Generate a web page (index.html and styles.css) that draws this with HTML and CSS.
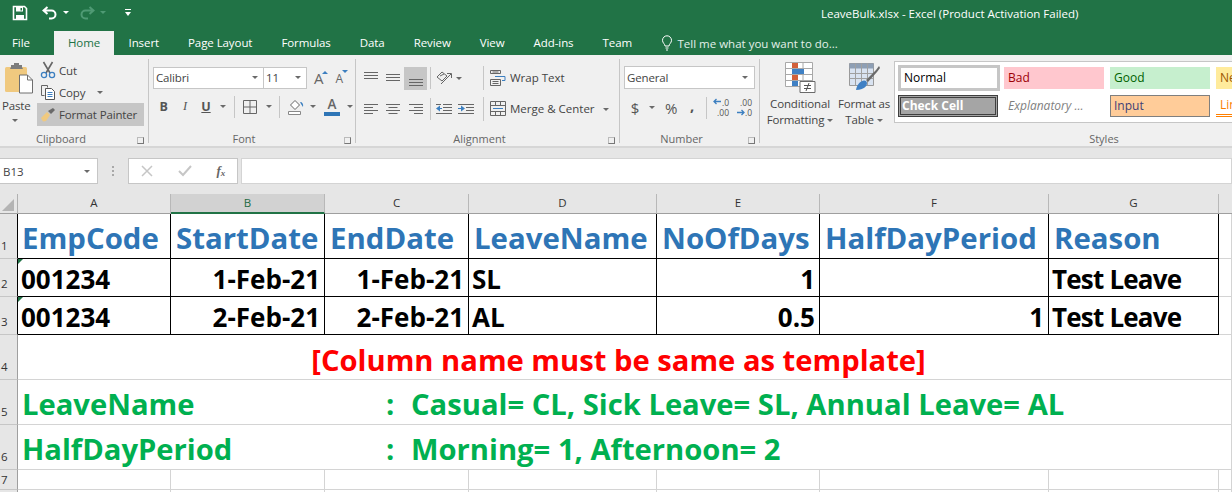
FILE: index.html
```html
<!DOCTYPE html>
<html lang="en">
<head>
<meta charset="utf-8">
<title>LeaveBulk.xlsx - Excel</title>
<link rel="stylesheet" href="styles.css">
</head>
<body>
<header class="titlebar">
  <div class="qat">
    <svg class="qat-save" width="16" height="16" viewBox="0 0 16 16"><path d="M1.500 1.500h11l2 2v11h-13z" fill="none" stroke="#fff" stroke-width="1.600"/><path d="M4 2h7v4.500H4zM4 10h8v4H4z" fill="#fff"/><path d="M8.500 3h1.500v2.500H8.500z" fill="#217346"/></svg>
    <svg class="qat-undo" width="16" height="14" viewBox="0 0 16 14"><path d="M5.500 1 1.500 4.500l4 3.500M2 4.500h7.500a4 4 0 0 1 0 8H7" fill="none" stroke="#fff" stroke-width="2"/></svg>
    <i class="caret caret-w"></i>
    <svg class="qat-redo" width="16" height="14" viewBox="0 0 16 14"><path d="M10.500 1l4 3.500-4 3.500M14 4.500H6.500a4 4 0 0 0 0 8H9" fill="none" stroke="#4f9a74" stroke-width="2"/></svg>
    <i class="caret caret-d"></i>
    <svg class="qat-more" width="8" height="9" viewBox="0 0 8 9"><path d="M1 1.500h6" stroke="#fff"/><path d="M1 4h6L4 8z" fill="#fff"/></svg>
  </div>
  <div class="doc-title">LeaveBulk.xlsx - Excel (Product Activation Failed)</div>
</header>
<nav class="tabs">
  <span class="tab tab-file">File</span>
  <span class="tab tab-active">Home</span>
  <span class="tab">Insert</span>
  <span class="tab">Page Layout</span>
  <span class="tab">Formulas</span>
  <span class="tab">Data</span>
  <span class="tab">Review</span>
  <span class="tab">View</span>
  <span class="tab">Add-ins</span>
  <span class="tab">Team</span>
  <span class="tell">
    <svg width="12" height="16" viewBox="0 0 12 16"><path d="M4 11c0-2-2.500-3-2.500-5.700a4.500 4.500 0 0 1 9 0C10.500 8 8 9 8 11zM4.500 13h3M5 15h2" fill="none" stroke="#fff"/></svg>
    Tell me what you want to do...
  </span>
</nav>
<section class="ribbon">
  <div class="group g-clip">
    <div class="body clip-body">
      <div class="paste">
        <svg width="30" height="32" viewBox="0 0 30 32"><rect x="1" y="5" width="22" height="25" rx="1.500" fill="#f0c97f"/><path d="M7 5V3h3V1h5v2h3v2l1 2H6z" fill="#7c7c7c"/><path d="M15.500 13h8l5 5v13h-13z" fill="#fff" stroke="#6f6f6f"/><path d="M23.500 13v5h5" fill="none" stroke="#6f6f6f"/></svg>
        <span class="paste-label">Paste</span>
        <i class="caret"></i>
      </div>
      <div class="clip-actions">
        <div class="clip-row">
          <svg width="16" height="18" viewBox="0 0 16 18"><path d="M3.500 1 10 12M12.500 1 6 12" stroke="#666" stroke-width="1.600" fill="none"/><circle cx="4" cy="14" r="2.600" fill="none" stroke="#3c7fc0" stroke-width="1.300"/><circle cx="12" cy="14" r="2.600" fill="none" stroke="#3c7fc0" stroke-width="1.300"/></svg>
          <span>Cut</span>
        </div>
        <div class="clip-row">
          <svg width="16" height="16" viewBox="0 0 16 16"><path d="M1.500 1.500h6v2M1.500 1.500v10h3" fill="none" stroke="#666"/><path d="M5.500 4.500h6l3 3v8h-9z" fill="#fff" stroke="#555"/><path d="M7.500 8.500h5M7.500 10.500h5M7.500 12.500h5" stroke="#3c7fc0"/></svg>
          <span>Copy</span><i class="caret caret-copy"></i>
        </div>
        <div class="clip-row clip-row-on">
          <svg width="16" height="14" viewBox="0 0 16 14"><path d="M1 10 7 4l3 3-4 6-3 .500z" fill="#f0c97f"/><path d="M8 3l3 3 4-4-2-2z" fill="#6a6a6a"/></svg>
          <span>Format Painter</span>
        </div>
      </div>
    </div>
    <div class="label label-clip"><span>Clipboard</span><i class="launch"></i></div>
  </div>

  <div class="group g-font">
    <div class="body font-body">
      <div class="row font-row">
        <div class="select sel-font"><span>Calibri</span><i class="caret"></i></div>
        <div class="select sel-size"><span>11</span><i class="caret"></i></div>
        <span class="grow-a">A<i class="tri-up"></i></span>
        <span class="shrink-a">A<i class="tri-down"></i></span>
      </div>
      <div class="row font-row2">
        <span class="ib w21 fb">B</span>
        <span class="ib w22 fi">I</span>
        <span class="ib w20 fu">U</span>
        <span class="ib w14"><i class="caret"></i></span>
        <i class="sep m4"></i>
        <span class="ib w24"><svg width="14" height="14" viewBox="0 0 14 14"><path d="M.5.500h13v13H.5zM7 .500v13M.5 7h13" fill="none" stroke="#666"/></svg></span>
        <span class="ib w14"><i class="caret"></i></span>
        <i class="sep m2"></i>
        <span class="ib w26"><svg width="17" height="16" viewBox="0 0 17 16"><path d="M2.500 6 7 1.500l4.500 4.500L7 10.500z" fill="#fff" stroke="#666"/><path d="M12 3c2.500 0 3.500 2 3 5l-2-3z" fill="#3c7fc0"/><path d="M.5 12.500h12v3H.5z" fill="#fff" stroke="#888"/></svg></span>
        <span class="ib w8"><i class="caret"></i></span>
        <span class="ib w26 mc"><span class="font-color">A</span></span>
        <span class="ib w10"><i class="caret"></i></span>
      </div>
    </div>
    <div class="label label-mid"><span>Font</span><i class="launch"></i></div>
  </div>

  <div class="group g-align">
    <div class="body align-body">
      <div class="row align-row">
        <span class="ib w22"><svg width="16" height="12" viewBox="0 0 16 12"><path d="M1 .500h14M1 3.500h14M1 6.500h14" stroke="#666"/></svg></span>
        <span class="ib w22"><svg width="14" height="10" viewBox="0 0 14 10"><path d="M0 1.500h14M0 4.500h14M0 7.500h14" stroke="#666"/></svg></span>
        <span class="ib w23 on"><svg width="14" height="22" viewBox="0 0 14 22"><path d="M0 12.500h14M0 15.500h14M0 18.500h14" stroke="#666"/></svg></span>
        <i class="sep m3"></i>
        <span class="ib w22"><svg width="17" height="16" viewBox="0 0 17 16"><path d="M5 14 15 4M11 3.500h4.500V8" fill="none" stroke="#666"/><path d="M1 7l5-5 5 4-5 5z" fill="none" stroke="#666"/><path d="M4 6l4-2" stroke="#666"/></svg></span>
        <span class="ib w8"><i class="caret"></i></span>
        <i class="sep m-wrap"></i>
        <span class="text-btn">
          <svg width="16" height="16" viewBox="0 0 16 16"><path d="M.5.500h10v3H.5zM.5 9.500h10v6H.5zM2.500 11.500h6M2.500 13.500h6M2.500 2h6" fill="none" stroke="#666"/><path d="M5 6.500h10v4h-3" fill="none" stroke="#3c7fc0"/></svg>
          <span>Wrap Text</span>
        </span>
      </div>
      <div class="row align-row2">
        <span class="ib w22"><svg width="14" height="12" viewBox="0 0 14 12"><path d="M0 1.500h14M0 4.500h9M0 7.500h14M0 10.500h9" stroke="#666"/></svg></span>
        <span class="ib w22"><svg width="14" height="12" viewBox="0 0 14 12"><path d="M0 1.500h14M2.500 4.500h9M0 7.500h14M2.500 10.500h9" stroke="#666"/></svg></span>
        <span class="ib w23"><svg width="14" height="12" viewBox="0 0 14 12"><path d="M0 1.500h14M5 4.500h9M0 7.500h14M5 10.500h9" stroke="#666"/></svg></span>
        <i class="sep m3"></i>
        <span class="ib w22"><svg width="16" height="12" viewBox="0 0 16 12"><path d="M7 1.500h9M7 4.500h9M7 7.500h9M0 10.500h16M0 1.500h5" stroke="#666"/><path d="M0 5.500 4 2.500v6z" fill="#3c7fc0"/><path d="M3 5.500h3" stroke="#3c7fc0"/></svg></span>
        <span class="ib w22"><svg width="16" height="12" viewBox="0 0 16 12"><path d="M8 4.500h8M8 7.500h8M0 10.500h16M0 1.500h16" stroke="#666"/><path d="M7 5.500 3 2.500v6z" fill="#3c7fc0"/><path d="M0 5.500h4" stroke="#3c7fc0"/></svg></span>
        <i class="sep m-merge"></i>
        <span class="text-btn">
          <svg width="16" height="15" viewBox="0 0 16 15"><path d="M.5.500h15v14H.5zM.5 4.500h15M.5 10.500h15M5.500.500v4M10.500.500v4M5.500 10.500v4M10.500 10.500v4" fill="none" stroke="#666"/><path d="M3 7.500h10" stroke="#3c7fc0"/></svg>
          <span>Merge &amp; Center</span>
        </span>
        <i class="caret caret-merge"></i>
      </div>
    </div>
    <div class="label label-mid"><span>Alignment</span><i class="launch"></i></div>
  </div>

  <div class="group g-num">
    <div class="body num-body">
      <div class="select sel-num"><span>General</span><i class="caret"></i></div>
      <div class="row num-row">
        <span class="ib w22 num-sym">$</span>
        <span class="ib w12"><i class="caret"></i></span>
        <span class="ib w26 num-sym">%</span>
        <span class="ib w16 num-comma">,</span>
        <i class="sep m-num"></i>
        <span class="ib w23 dec"><b>.0</b><b>.00</b><svg width="8" height="7" viewBox="0 0 8 7"><path d="M8 3.500H1M3.500 1 1 3.500 3.500 6" fill="none" stroke="#3c7fc0" stroke-width="1.300"/></svg></span>
        <span class="ib w23 dec"><b>.00</b><b>.0</b><svg width="8" height="7" viewBox="0 0 8 7"><path d="M0 3.500h7M4.500 1 7 3.500 4.500 6" fill="none" stroke="#3c7fc0" stroke-width="1.300"/></svg></span>
      </div>
    </div>
    <div class="label label-mid"><span>Number</span><i class="launch"></i></div>
  </div>

  <div class="group g-styles">
    <div class="body styles-body">
      <div class="big cf">
        <svg width="31" height="31" viewBox="0 0 31 31"><path d="M.5.500h27v24H.5zM9 .500v24M18 .500v24M.5 6.500h27M.5 12.500h27M.5 18.500h27" fill="#fff" stroke="#a8a8a8"/><path d="M7 1h6v5H7zM7 13h6v5H7z" fill="#d2603a"/><path d="M7 7h12v5H7zM7 19h6v5H7z" fill="#3f80c4"/><path d="M15 19.500h15v11H15z" fill="#fff" stroke="#6a6a6a"/><path d="M19 23.500h7M19 26.500h7M24 21l-3 8" stroke="#555" fill="none"/></svg>
        <span class="big-text">Conditional<br>Formatting<i class="caret caret-in"></i></span>
      </div>
      <div class="big ft">
        <svg width="31" height="31" viewBox="0 0 31 31"><path d="M.5 1.500h24v22H.5z" fill="#d9e3f1" stroke="#999"/><path d="M.5 1.500h24v5H.5z" fill="#8e9fb5"/><path d="M6.500 1.500v22M12.500 1.500v22M18.500 1.500v22M.5 11.500h24M.5 16.500h24" stroke="#a0a0a0"/><path d="M17 18 27 8l3-4 1 2-3 4-9 10z" fill="#6a6a6a"/><path d="M7 28c1-7 7-11 10-9 3 3-1 9-10 9z" fill="#3f80c4"/></svg>
        <span class="big-text">Format as<br>Table<i class="caret caret-in"></i></span>
      </div>
      <div class="gallery">
        <span class="st st-normal">Normal</span>
        <span class="st st-bad">Bad</span>
        <span class="st st-good">Good</span>
        <span class="st st-neutral">Neutral</span>
        <span class="st st-check">Check Cell</span>
        <span class="st st-expl">Explanatory ...</span>
        <span class="st st-input">Input</span>
        <span class="st st-link">Linked Cell</span>
      </div>
    </div>
    <div class="label label-styles"><span>Styles</span></div>
  </div>
</section>

<section class="formula-strip">
  <div class="namebox"><span>B13</span><i class="caret"></i></div>
  <div class="grip"></div>
  <div class="fx-box">
    <svg width="12" height="12" viewBox="0 0 12 12"><path d="M1 1l10 10M11 1 1 11" stroke="#c6c6c6" stroke-width="1.500"/></svg>
    <svg width="14" height="12" viewBox="0 0 14 12"><path d="M1 6l4 4 8-9" fill="none" stroke="#c6c6c6" stroke-width="2"/></svg>
    <span class="fx">f<sub>x</sub></span>
  </div>
  <div class="formula-input"></div>
</section>

<main class="sheet">
  <div class="corner"><i></i></div>
  <div class="ch">A</div><div class="ch ch-on">B</div><div class="ch">C</div><div class="ch">D</div><div class="ch">E</div><div class="ch">F</div><div class="ch">G</div><div class="ch ch-rest"></div>

  <div class="rh rh-b">1</div>
  <div class="c c-b c-h c-first">EmpCode</div><div class="c c-b c-h">StartDate</div><div class="c c-b c-h">EndDate</div><div class="c c-b c-h">LeaveName</div><div class="c c-b c-h">NoOfDays</div><div class="c c-b c-h">HalfDayPeriod</div><div class="c c-b c-h">Reason</div><div class="c"></div>

  <div class="rh rh-b">2</div>
  <div class="c c-b c-d c-flag">001234</div><div class="c c-b c-d c-r">1-Feb-21</div><div class="c c-b c-d c-r">1-Feb-21</div><div class="c c-b c-d">SL</div><div class="c c-b c-d c-r">1</div><div class="c c-b c-d c-r"></div><div class="c c-b c-d c-tl">Test Leave</div><div class="c"></div>

  <div class="rh rh-b">3</div>
  <div class="c c-b c-d c-flag">001234</div><div class="c c-b c-d c-r">2-Feb-21</div><div class="c c-b c-d c-r">2-Feb-21</div><div class="c c-b c-d">AL</div><div class="c c-b c-d c-r">0.5</div><div class="c c-b c-d c-r">1</div><div class="c c-b c-d c-tl">Test Leave</div><div class="c"></div>

  <div class="rh">4</div>
  <div class="c c-span c-note">[Column name must be same as template]</div><div class="c"></div>

  <div class="rh">5</div>
  <div class="c c-span c-key"><span class="key">LeaveName</span><span class="colon">:</span><span>Casual= CL, Sick Leave= SL, Annual Leave= AL</span></div><div class="c"></div>

  <div class="rh">6</div>
  <div class="c c-span c-key"><span class="key">HalfDayPeriod</span><span class="colon">:</span><span>Morning= 1, Afternoon= 2</span></div><div class="c"></div>

  <div class="rh rh-s">7</div>
  <div class="c"></div><div class="c"></div><div class="c"></div><div class="c"></div><div class="c"></div><div class="c"></div><div class="c"></div><div class="c"></div>

  <div class="rh"></div>
  <div class="c"></div><div class="c"></div><div class="c"></div><div class="c"></div><div class="c"></div><div class="c"></div><div class="c"></div><div class="c"></div>
</main>
</body>
</html>
```
FILE: styles.css
```css
* { box-sizing: border-box; }
html, body { margin: 0; height: 492px; overflow: hidden; background: #fff; }
body { font-family: "Open Sans", "Noto Sans", sans-serif; font-size: 11.5px; color: #444; letter-spacing: -0.15px; }
i { display: block; font-style: normal; }

.titlebar { height: 31px; background: #217346; color: #fff; display: flex; align-items: flex-start; }
.qat { width: 821px; height: 25px; display: flex; align-items: center; }
.qat-save { margin-left: 12px; }
.qat-undo { margin-left: 14px; }
.qat-redo { margin-left: 10px; }
.qat-more { margin-left: 18px; }
.caret-w { margin-left: 5px; border-top-color: #fff !important; }
.caret-d { margin-left: 5px; border-top-color: #4f9a74 !important; }
.doc-title { font-size: 11.5px; line-height: 28px; white-space: nowrap; letter-spacing: 0; }

.caret { width: 0; height: 0; border-left: 3.5px solid transparent; border-right: 3.5px solid transparent; border-top: 3.5px solid #6a6a6a; flex: none; }

.tabs { height: 24px; background: #217346; color: #fff; display: flex; align-items: stretch; font-size: 11.5px; letter-spacing: -0.08px; }
.tab { padding: 0 14.5px; line-height: 24px; white-space: nowrap; }
.tab-file { padding: 0 12px; width: 54px; }
.tab-active { background: #f0f0f0; color: #217346; width: 60px; padding: 0; text-align: center; }
.tell { margin-left: 14px; display: flex; align-items: center; gap: 5px; color: #e3f0ea; white-space: nowrap; letter-spacing: 0; }

.ribbon { height: 93px; background: #f0f0f0; border-bottom: 2px solid #d6d6d6; padding-top: 4px; display: flex; align-items: flex-start; }
.group { height: 84px; border-right: 1px solid #c6c6c6; display: flex; flex-direction: column; flex: none; }
.g-clip { width: 149px; }
.g-font { width: 207px; }
.g-align { width: 264px; }
.g-num { width: 140px; }
.g-styles { width: 472px; border-right: 0; }
.body { height: 76px; }
.label { height: 8px; line-height: 8px; font-size: 11px; color: #666; text-align: center; position: relative; letter-spacing: 0; }
.label-clip { padding-right: 26px; }
.label-mid { padding-right: 16px; }
.label-styles { padding-left: 216px; }
.launch { position: absolute; right: 4px; top: 2px; width: 7px; height: 7px; border-right: 1px solid #777; border-bottom: 1px solid #777; border-left: 1px solid #bbb; border-top: 1px solid #bbb; }

.row { display: flex; align-items: center; }
.ib { display: flex; align-items: center; justify-content: center; height: 23px; flex: none; position: relative; }
.w8 { width: 8px; } .w10 { width: 10px; } .w12 { width: 12px; } .w14 { width: 14px; } .w16 { width: 16px; }
.w20 { width: 20px; } .w21 { width: 21px; } .w22 { width: 22px; } .w23 { width: 23px; } .w24 { width: 24px; } .w26 { width: 26px; }
.on { background: #c6c6c6; }
.sep { width: 1px; height: 22px; background: #c6c6c6; flex: none; }
.m2 { margin: 0 3px 0 3px; } .m3 { margin: 0 2px 0 3px; } .m4 { margin: 0 3px 0 4px; }
.m-wrap { margin: 0 6px 0 20px; height: 24px; }
.m-merge { margin: 0 6px 0 6px; height: 24px; }
.m-num { margin: 0 3px 0 6px; }
.mc { margin-left: 2px; }

.clip-body { display: flex; }
.paste { width: 37px; padding: 3px 0 0 4px; display: flex; flex-direction: column; align-items: flex-start; }
.paste-label { margin: 4px 0 0 -2px; line-height: 16px; }
.paste .caret { margin: 5px 0 0 8px; }
.clip-actions { width: 107px; display: flex; flex-direction: column; }
.clip-row { height: 22px; display: flex; align-items: center; padding-left: 3px; gap: 3px; }
.clip-row-on { height: 23px; background: #c6c6c6; }
.caret-copy { margin-left: 9px; }

.font-body { padding: 8px 0 0 4px; }
.font-row { height: 21px; }
.select { height: 23px; background: #fff; border: 1px solid #c6c6c6; display: flex; align-items: center; justify-content: space-between; padding: 0 5px 0 2px; color: #444; flex: none; }
.font-row .select { height: 22px; }
.sel-font { width: 111px; }
.sel-size { width: 43px; border-left: 0; }
.grow-a, .shrink-a { position: relative; display: block; font-size: 15px; line-height: 20px; color: #666; width: 20px; margin-left: 7px; }
.shrink-a { font-size: 12px; margin-left: 2px; padding-top: 2px; }
.tri-up, .tri-down { position: absolute; left: 8px; top: 3px; width: 0; height: 0; border-left: 3px solid transparent; border-right: 3px solid transparent; }
.tri-up { border-bottom: 3px solid #3c7fc0; }
.tri-down { border-top: 3px solid #3c7fc0; left: 6px; }
.font-row2 { margin-top: 7px; }
.fb { font-weight: 700; font-size: 12.5px; color: #555; }
.fi { font-style: italic; font-size: 12.5px; color: #555; font-family: "Liberation Serif", serif; }
.fu { font-weight: 700; font-size: 12.5px; color: #555; text-decoration: underline; }
.font-color { display: block; width: 16px; font-size: 13.5px; line-height: 15px; font-weight: 600; text-align: center; color: #666; border-bottom: 4px solid #2e75b6; }

.align-body { padding: 7px 0 0 4px; }
.align-row2 { margin-top: 7px; }
.text-btn { display: flex; align-items: center; gap: 4px; white-space: nowrap; letter-spacing: 0; padding-bottom: 1px; }
.caret-merge { margin-left: 8px; }

.num-body { padding: 7px 0 0 4px; }
.sel-num { width: 131px; padding: 0 6px 0 2px; }
.num-row { margin-top: 7px; }
.num-sym { font-size: 15px; color: #555; }
.num-comma { font-size: 15px; font-weight: 700; color: #555; padding-bottom: 6px; }
.dec { flex-direction: column; align-items: flex-end; font-size: 8.5px; color: #555; line-height: 10px; letter-spacing: 0; padding-right: 4px; }
.dec b { font-weight: 400; display: block; }
.dec svg { position: absolute; left: 3px; top: 2px; }
.dec:last-child svg { top: 13px; left: 4px; }

.styles-body { display: flex; }
.big { display: flex; flex-direction: column; align-items: center; flex: none; }
.big svg { margin-top: 3px; }
.cf { width: 78px; padding-left: 2px; }
.ft { width: 56px; padding-right: 4px; }
.big-text { text-align: center; line-height: 16px; margin-top: 3px; white-space: nowrap; }
.caret-in { display: inline-block; margin-left: 3px; vertical-align: 2px; }
.gallery { width: 338px; height: 62px; margin-top: 2px; background: #fff; border: 1px solid #c6c6c6; border-right: 0; overflow: hidden; display: grid; grid-template-columns: 100px 100px 100px 100px; column-gap: 6px; grid-template-rows: 28px 22px; row-gap: 2px; padding: 3px 0 0 3px; font-size: 12px; letter-spacing: 0; }
.st { display: block; white-space: nowrap; overflow: hidden; padding-left: 4px; line-height: 22px; }
.st-normal { width: 102px; background: #fff; border: 3px solid #c6c6c6; color: #000; line-height: 20px; padding-left: 3px; height: 26px; }
.st-bad { background: #ffc7ce; color: #9c0006; margin: 2px 0 4px; }
.st-good { background: #c6efce; color: #006100; margin: 2px 0 4px; }
.st-neutral { background: #ffeb9c; color: #9c5700; margin: 2px 0 4px; }
.st-check { background: #a5a5a5; color: #fff; font-weight: 700; border: 3px double #3f3f3f; line-height: 16px; padding-left: 1px; }
.st-expl { color: #7f7f7f; font-style: italic; }
.st-input { background: #ffcc99; color: #3f3f76; border: 1px solid #7f7f7f; line-height: 20px; padding-left: 3px; }
.st-link { color: #fa7d00; border-bottom: 3px double #ff8001; line-height: 20px; }

.formula-strip { height: 46px; background: #e6e6e6; padding-top: 10px; display: flex; align-items: flex-start; }
.namebox { width: 98px; height: 26px; background: #fff; border: 1px solid #c6c6c6; border-left: 0; display: flex; align-items: center; justify-content: space-between; padding: 0 7px 0 3px; color: #444; letter-spacing: 0; }
.grip { width: 2px; height: 10px; margin: 8px 14px 0 14px; border-left: 2px dotted #a8a8a8; }
.fx-box { width: 110px; height: 26px; background: #fff; border: 1px solid #c6c6c6; display: flex; align-items: center; padding: 0 12px; justify-content: space-between; }
.fx { font-family: "Liberation Serif", serif; font-style: italic; font-weight: 700; font-size: 13px; color: #666; }
.fx sub { font-size: 9px; vertical-align: -1px; }
.formula-input { flex: 1; height: 26px; margin-left: 3px; background: #fff; border: 1px solid #d4d4d4; }

.sheet { display: grid; grid-template-columns: 18px 153px 154px 144px 188px 163px 229px 170px 13px; grid-template-rows: 20px 45px 38px 38px 45px 45px 45px 20px 20px; }
.corner { background: #e6e6e6; border-right: 1px solid #b0b0b0; border-bottom: 1px solid #9f9f9f; display: flex; align-items: flex-end; justify-content: flex-end; padding: 0 3px 2px 0; }
.corner i { width: 0; height: 0; border-left: 12px solid transparent; border-bottom: 12px solid #b4b4b4; }
.ch { background: #e6e6e6; border-right: 1px solid #b8b8b8; border-bottom: 1px solid #9f9f9f; text-align: center; line-height: 18px; font-size: 11.5px; color: #333; letter-spacing: 0; }
.ch-on { background: #d2d2d2; color: #1f6b42; border-bottom: 2px solid #217346; }
.ch-rest { border-right: 0; }
.rh { background: #e6e6e6; border-right: 1px solid #9f9f9f; border-bottom: 1px solid #c6c6c6; font-size: 11.5px; color: #333; display: flex; align-items: flex-end; padding: 0 0 4px 1px; line-height: 16px; letter-spacing: 0; }
.rh-b { border-right-color: #000; }
.rh-s { padding-bottom: 1px; }
.c { border-right: 1px solid #d4d4d4; border-bottom: 1px solid #d4d4d4; font-family: "Open Sans", sans-serif; font-weight: 700; white-space: nowrap; display: flex; align-items: flex-end; overflow: hidden; letter-spacing: 0; }
.c-b { border-color: #000; position: relative; }
.c-h { color: #2e75b6; font-size: 29.4px; line-height: 40px; padding: 0 0 0 5px; }
.c-first { padding-left: 4px; }
.c-d { color: #000; font-size: 26px; line-height: 34px; padding: 0 4px 0 3px; }
.c-tl { letter-spacing: -0.8px; }
.c-r { justify-content: flex-end; }
.c-flag::before { content: ""; position: absolute; left: 0; top: 0; border-top: 5px solid #217346; border-right: 5px solid transparent; }
.c-span { grid-column: span 7; border-right: 0; }
.c-note { color: #f00; font-size: 29.2px; line-height: 38px; justify-content: center; }
.c-key { color: #00b050; font-size: 29.2px; line-height: 40px; padding-left: 4px; }
.key { width: 364px; }
.colon { width: 25px; }
```
